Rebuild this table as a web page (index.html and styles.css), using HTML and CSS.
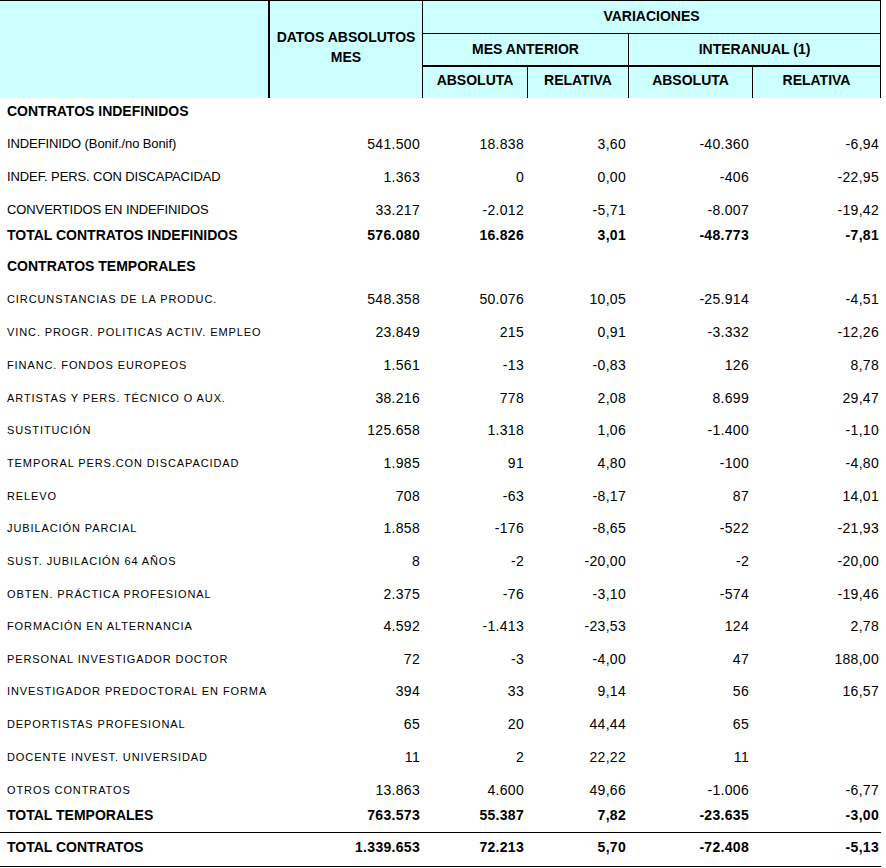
FILE: index.html
```html
<!DOCTYPE html>
<html lang="es">
<head>
<meta charset="utf-8">
<title>Contratos</title>
<link rel="stylesheet" href="styles.css">
</head>
<body>
<table class="tbl">
  <colgroup>
    <col class="c0"><col class="c1"><col class="c2"><col class="c3"><col class="c4"><col class="c5">
  </colgroup>
  <thead>
    <tr class="hr1">
      <th rowspan="3" class="hd first"></th>
      <th rowspan="3" class="hd second">DATOS ABSOLUTOS<br>MES</th>
      <th colspan="4" class="hd var">VARIACIONES</th>
    </tr>
    <tr class="hr2">
      <th colspan="2" class="hd sub">MES ANTERIOR</th>
      <th colspan="2" class="hd sub">INTERANUAL (1)</th>
    </tr>
    <tr class="hr3">
      <th class="hd leaf">ABSOLUTA</th>
      <th class="hd leaf">RELATIVA</th>
      <th class="hd leaf">ABSOLUTA</th>
      <th class="hd leaf">RELATIVA</th>
    </tr>
  </thead>
  <tbody>
    <tr class="sec h23"><td class="lab b">CONTRATOS INDEFINIDOS</td><td></td><td></td><td></td><td></td><td></td></tr>
    <tr class="h33"><td class="lab ind">INDEFINIDO (Bonif./no Bonif)</td><td class="n p1">541.500</td><td class="n p2">18.838</td><td class="n p3">3,60</td><td class="n p4">-40.360</td><td class="n p5">-6,94</td></tr>
    <tr class="h33"><td class="lab ind">INDEF. PERS. CON DISCAPACIDAD</td><td class="n p1">1.363</td><td class="n p2">0</td><td class="n p3">0,00</td><td class="n p4">-406</td><td class="n p5">-22,95</td></tr>
    <tr class="h33"><td class="lab ind">CONVERTIDOS EN INDEFINIDOS</td><td class="n p1">33.217</td><td class="n p2">-2.012</td><td class="n p3">-5,71</td><td class="n p4">-8.007</td><td class="n p5">-19,42</td></tr>
    <tr class="h25 tot"><td class="lab b">TOTAL CONTRATOS INDEFINIDOS</td><td class="n p1">576.080</td><td class="n p2">16.826</td><td class="n p3">3,01</td><td class="n p4">-48.773</td><td class="n p5">-7,81</td></tr>
    <tr class="sec h31"><td class="lab b">CONTRATOS TEMPORALES</td><td></td><td></td><td></td><td></td><td></td></tr>
    <tr class="h33"><td class="lab tmp">CIRCUNSTANCIAS DE LA PRODUC.</td><td class="n p1">548.358</td><td class="n p2">50.076</td><td class="n p3">10,05</td><td class="n p4">-25.914</td><td class="n p5">-4,51</td></tr>
    <tr class="h33"><td class="lab tmp">VINC. PROGR. POLITICAS ACTIV. EMPLEO</td><td class="n p1">23.849</td><td class="n p2">215</td><td class="n p3">0,91</td><td class="n p4">-3.332</td><td class="n p5">-12,26</td></tr>
    <tr class="h33"><td class="lab tmp">FINANC. FONDOS EUROPEOS</td><td class="n p1">1.561</td><td class="n p2">-13</td><td class="n p3">-0,83</td><td class="n p4">126</td><td class="n p5">8,78</td></tr>
    <tr class="h33"><td class="lab tmp">ARTISTAS Y PERS. TÉCNICO O AUX.</td><td class="n p1">38.216</td><td class="n p2">778</td><td class="n p3">2,08</td><td class="n p4">8.699</td><td class="n p5">29,47</td></tr>
    <tr class="h32"><td class="lab tmp">SUSTITUCIÓN</td><td class="n p1">125.658</td><td class="n p2">1.318</td><td class="n p3">1,06</td><td class="n p4">-1.400</td><td class="n p5">-1,10</td></tr>
    <tr class="h33"><td class="lab tmp">TEMPORAL PERS.CON DISCAPACIDAD</td><td class="n p1">1.985</td><td class="n p2">91</td><td class="n p3">4,80</td><td class="n p4">-100</td><td class="n p5">-4,80</td></tr>
    <tr class="h33"><td class="lab tmp">RELEVO</td><td class="n p1">708</td><td class="n p2">-63</td><td class="n p3">-8,17</td><td class="n p4">87</td><td class="n p5">14,01</td></tr>
    <tr class="h32"><td class="lab tmp">JUBILACIÓN PARCIAL</td><td class="n p1">1.858</td><td class="n p2">-176</td><td class="n p3">-8,65</td><td class="n p4">-522</td><td class="n p5">-21,93</td></tr>
    <tr class="h33"><td class="lab tmp">SUST. JUBILACIÓN 64 AÑOS</td><td class="n p1">8</td><td class="n p2">-2</td><td class="n p3">-20,00</td><td class="n p4">-2</td><td class="n p5">-20,00</td></tr>
    <tr class="h33"><td class="lab tmp">OBTEN. PRÁCTICA PROFESIONAL</td><td class="n p1">2.375</td><td class="n p2">-76</td><td class="n p3">-3,10</td><td class="n p4">-574</td><td class="n p5">-19,46</td></tr>
    <tr class="h32"><td class="lab tmp">FORMACIÓN EN ALTERNANCIA</td><td class="n p1">4.592</td><td class="n p2">-1.413</td><td class="n p3">-23,53</td><td class="n p4">124</td><td class="n p5">2,78</td></tr>
    <tr class="h33"><td class="lab tmp">PERSONAL INVESTIGADOR DOCTOR</td><td class="n p1">72</td><td class="n p2">-3</td><td class="n p3">-4,00</td><td class="n p4">47</td><td class="n p5">188,00</td></tr>
    <tr class="h32"><td class="lab tmp">INVESTIGADOR PREDOCTORAL EN FORMA</td><td class="n p1">394</td><td class="n p2">33</td><td class="n p3">9,14</td><td class="n p4">56</td><td class="n p5">16,57</td></tr>
    <tr class="h33"><td class="lab tmp">DEPORTISTAS PROFESIONAL</td><td class="n p1">65</td><td class="n p2">20</td><td class="n p3">44,44</td><td class="n p4">65</td><td class="n p5"></td></tr>
    <tr class="h33"><td class="lab tmp">DOCENTE INVEST. UNIVERSIDAD</td><td class="n p1">11</td><td class="n p2">2</td><td class="n p3">22,22</td><td class="n p4">11</td><td class="n p5"></td></tr>
    <tr class="h33"><td class="lab tmp">OTROS CONTRATOS</td><td class="n p1">13.863</td><td class="n p2">4.600</td><td class="n p3">49,66</td><td class="n p4">-1.006</td><td class="n p5">-6,77</td></tr>
    <tr class="tt tot"><td class="lab b">TOTAL TEMPORALES</td><td class="n p1">763.573</td><td class="n p2">55.387</td><td class="n p3">7,82</td><td class="n p4">-23.635</td><td class="n p5">-3,00</td></tr>
    <tr class="gt tot"><td class="lab b">TOTAL CONTRATOS</td><td class="n p1">1.339.653</td><td class="n p2">72.213</td><td class="n p3">5,70</td><td class="n p4">-72.408</td><td class="n p5">-5,13</td></tr>
  </tbody>
</table>
</body>
</html>
```

FILE: styles.css
```css
html, body {
  margin: 0;
  padding: 0;
  background: #ffffff;
}

body {
  font-family: "Liberation Sans", Arial, sans-serif;
  color: #000000;
}

.tbl {
  table-layout: fixed;
  border-collapse: separate;
  border-spacing: 0;
  width: 881px;
}

th, td {
  box-sizing: border-box;
  padding: 0;
  white-space: nowrap;
  overflow: hidden;
}

.c0 { width: 270px; }
.c1 { width: 153px; }
.c2 { width: 105px; }
.c3 { width: 101px; }
.c4 { width: 124px; }
.c5 { width: 128px; }

/* header */
.hd {
  background: #ccffff;
  font-weight: bold;
  font-size: 14px;
  line-height: 20px;
  text-align: center;
  vertical-align: middle;
  border-right: 1px solid #000;
}

.first {
  border-top: 1px solid #000;
  border-right: 2px solid #000;
}

.second {
  border-top: 1px solid #000;
  padding-bottom: 6px;
}

.var {
  border-top: 1px solid #000;
  border-bottom: 1px solid #000;
  height: 34px;
  padding-bottom: 2px;
}

.sub {
  border-bottom: 2px solid #000;
  height: 33px;
  padding-bottom: 1px;
}

.leaf {
  height: 31px;
  padding-bottom: 5px;
}

/* body */
.tbl tbody td {
  vertical-align: bottom;
  line-height: 16px;
  padding-bottom: 2px;
}

.h23 td { height: 23px; }
.h25 td { height: 25px; }
.h31 td { height: 31px; }
.h32 td { height: 32px; }
.h33 td { height: 33px; }

.tt td {
  height: 32px;
}

.tbl tbody .tt td {
  padding-bottom: 9px;
}

.gt td {
  height: 35px;
  border-top: 1px solid #000;
  border-bottom: 1px solid #000;
}

.tbl tbody .gt td {
  padding-bottom: 11px;
}

.lab {
  text-align: left;
  padding-left: 7px;
}

.b {
  font-weight: bold;
  font-size: 14px;
}

.ind {
  font-size: 13px;
  letter-spacing: -0.1px;
}

.tmp {
  font-size: 11px;
  letter-spacing: 0.9px;
}

.n {
  text-align: right;
  font-size: 14px;
  letter-spacing: 0.3px;
}

.tot .n {
  font-weight: bold;
}

.p1 { padding-right: 3px; }
.p2 { padding-right: 4px; }
.p3 { padding-right: 3px; }
.p4 { padding-right: 4px; }
.p5 { padding-right: 2px; }
```
